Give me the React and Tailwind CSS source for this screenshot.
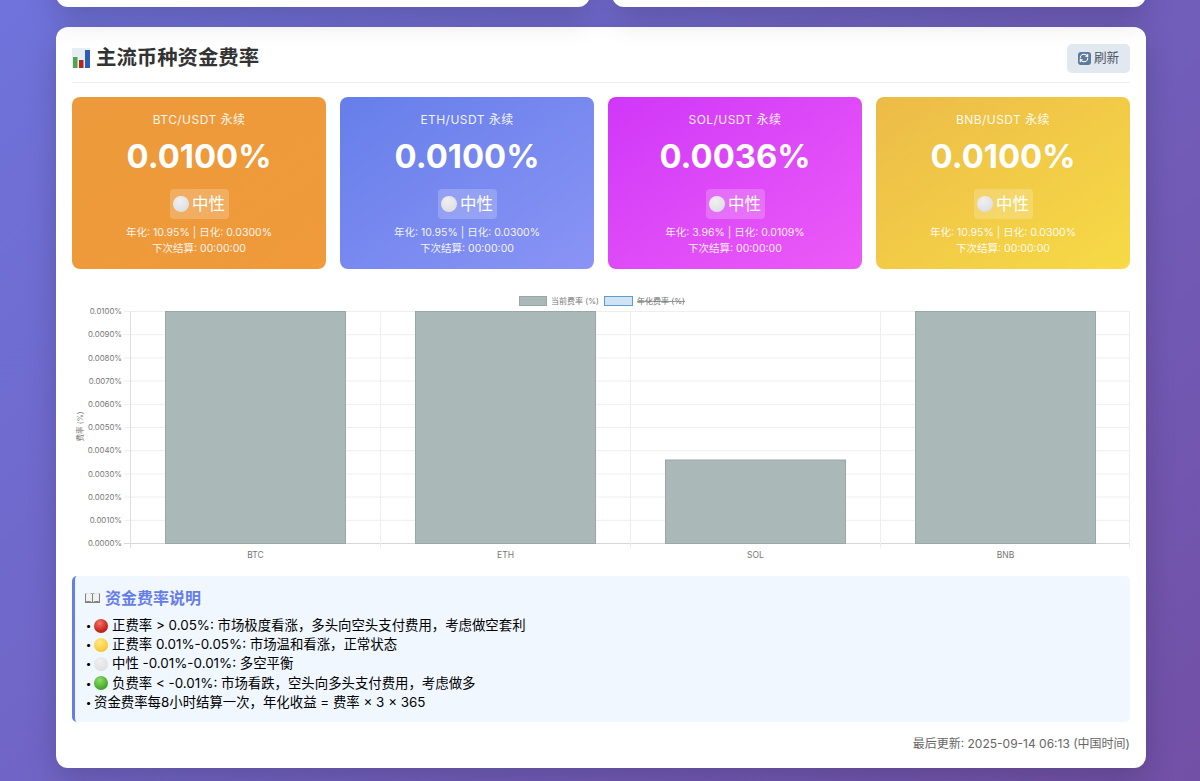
import { RefreshCw } from 'lucide-react';

const FONT = 'font-["Inter","Noto_Sans_CJK_SC",sans-serif]';

const coins = [
  { pair: 'BTC/USDT 永续', rate: '0.0100%', line: '年化: 10.95% | 日化: 0.0300%', bg: 'bg-gradient-to-br from-[#ec9a3b] to-[#f09a3a]' },
  { pair: 'ETH/USDT 永续', rate: '0.0100%', line: '年化: 10.95% | 日化: 0.0300%', bg: 'bg-gradient-to-br from-[#667eea] to-[#8a94f5]' },
  { pair: 'SOL/USDT 永续', rate: '0.0036%', line: '年化: 3.96% | 日化: 0.0109%', bg: 'bg-gradient-to-br from-[#d036f8] to-[#ec5af7]' },
  { pair: 'BNB/USDT 永续', rate: '0.0100%', line: '年化: 10.95% | 日化: 0.0300%', bg: 'bg-gradient-to-br from-[#ecbb48] to-[#f7da45]' },
];

const notes = [
  { dot: 'red', text: '正费率 > 0.05%: 市场极度看涨，多头向空头支付费用，考虑做空套利' },
  { dot: 'yellow', text: '正费率 0.01%-0.05%: 市场温和看涨，正常状态' },
  { dot: 'white', text: '中性 -0.01%-0.01%: 多空平衡' },
  { dot: 'green', text: '负费率 < -0.01%: 市场看跌，空头向多头支付费用，考虑做多' },
  { text: '资金费率每8小时结算一次，年化收益 = 费率 × 3 × 365' },
];

function Dot({ color, size = 'w-[14px] h-[14px]' }) {
  const fill = {
    red: 'bg-[radial-gradient(circle_at_40%_30%,#f0746a,#c8261c_60%,#8f1a14)]',
    yellow: 'bg-[radial-gradient(circle_at_40%_30%,#ffe88a,#fbcf3c_60%,#eaa820)]',
    white: 'bg-[radial-gradient(circle_at_40%_30%,#f0f0f2,#e2e2e4_65%,#d2d2d5)]',
    green: 'bg-[radial-gradient(circle_at_40%_30%,#8fdc6a,#4caf30_60%,#2d8a1e)]',
  }[color];
  return <span className={`inline-block rounded-full shrink-0 ${size} ${fill}`} />;
}

function ChartEmoji() {
  return (
    <svg width="18" height="20" viewBox="0 0 18 20" className="shrink-0">
      <rect width="18" height="20" fill="#e6edf3" />
      <rect x="1" y="9" width="4.5" height="11" fill="#4fa651" />
      <rect x="7" y="12" width="4.5" height="8" fill="#b3261e" />
      <rect x="13" y="2" width="5" height="18" fill="#2a5fb8" />
    </svg>
  );
}

function BookEmoji() {
  return (
    <svg width="15" height="12" viewBox="0 0 15 12" className="shrink-0">
      <path d="M0 1.5 L7 1 L7.5 2 L8 1 L15 1.5 V11 H0 Z" fill="#7d8288" />
      <path d="M1 1.5 C3 0.6 5.5 0.8 7 2 V10 C5.5 9 3 8.8 1 9.6 Z M14 1.5 C12 0.6 9.5 0.8 8 2 V10 C9.5 9 12 8.8 14 9.6 Z" fill="#f1f1ee" />
    </svg>
  );
}

function CoinCard({ coin }) {
  return (
    <div className={`h-[172px] rounded-[8px] pt-[14px] text-white text-center flex flex-col items-center ${coin.bg}`}>
      <div className="text-[12px] leading-[17px] opacity-90 tracking-[0.45px]">{coin.pair}</div>
      <div className="text-[32.8px] leading-[44px] font-bold mt-[6px]">{coin.rate}</div>
      <div className="mt-[11px] h-[30px] w-[59px] rounded-[4px] bg-white/20 flex items-center justify-center gap-[3px] text-[16.5px]">
        <Dot color="white" size="w-[16px] h-[16px]" />
        <span>中性</span>
      </div>
      <div className="mt-[6px] text-[10.5px] leading-[15.5px] opacity-90">
        <div>{coin.line}</div>
        <div>下次结算: 00:00:00</div>
      </div>
    </div>
  );
}

function RateChart() {
  const ticks = ['0.0100%', '0.0090%', '0.0080%', '0.0070%', '0.0060%', '0.0050%', '0.0040%', '0.0030%', '0.0020%', '0.0010%', '0.0000%'];
  const bars = [
    { label: 'BTC', x: 93.5, y: 21.5 },
    { label: 'ETH', x: 343.5, y: 21.5 },
    { label: 'SOL', x: 593.5, y: 170 },
    { label: 'BNB', x: 843.5, y: 21.5 },
  ];
  const top = 21.5;
  const step = 23.2;
  const bottom = top + step * 10;
  return (
    <svg width="1058" height="282" viewBox="0 0 1058 282" className="block" fontFamily="Inter, 'Noto Sans CJK SC', sans-serif">
      {/* legend */}
      <rect x="447.5" y="6.5" width="27" height="9" fill="#aab8b7" stroke="#98a8a8" />
      <text x="479" y="14" fontSize="8" fill="#777">当前费率 (%)</text>
      <rect x="532.5" y="6.5" width="28" height="9" fill="#cfe3f5" stroke="#5d9cd0" />
      <text x="565" y="14" fontSize="8" fill="#777" textDecoration="line-through">年化费率 (%)</text>

      {/* grid */}
      {ticks.map((t, i) => (
        <g key={t}>
          <line x1="52" x2="1058" y1={top + step * i} y2={top + step * i} stroke={i === 10 ? '#d8d8d8' : '#eeeeee'} />
          <text x="50" y={top + step * i + 2.7} fontSize="7.8" fill="#777" textAnchor="end">{t}</text>
        </g>
      ))}
      {[58.5, 308.5, 558.5, 808.5, 1058].map((x, i) => (
        <line key={x} x1={x - (i === 4 ? 0.5 : 0)} x2={x - (i === 4 ? 0.5 : 0)} y1={top} y2={bottom + 5} stroke={i === 0 ? '#dedede' : '#eeeeee'} />
      ))}
      <text transform={`translate(10.5 ${top + 115}) rotate(-90)`} fontSize="7.5" fill="#777" textAnchor="middle">费率 (%)</text>

      {/* bars */}
      {bars.map(b => (
        <g key={b.label}>
          <rect x={b.x} y={b.y} width="180" height={bottom - b.y} fill="#aab8b7" stroke="#98a8a8" />
          <text x={b.x + 90} y={bottom + 14.5} fontSize="8.5" fill="#777" textAnchor="middle">{b.label}</text>
        </g>
      ))}
    </svg>
  );
}

export default function App() {
  return (
    <div className={`h-[781px] overflow-hidden bg-[linear-gradient(135deg,#6f73db,#7250a6)] pl-[56px] pr-[54px] ${FONT}`}>
      <div className="grid grid-cols-2 gap-[22px] -mt-[34px]">
        <div className="h-[41px] bg-white rounded-[12px] shadow-[0_10px_30px_rgba(0,0,0,0.18)]" />
        <div className="h-[41px] bg-white rounded-[12px] shadow-[0_10px_30px_rgba(0,0,0,0.18)]" />
      </div>

      <div className="mt-[20px] h-[741px] bg-white rounded-[12px] shadow-[0_10px_30px_rgba(0,0,0,0.18)] px-[16px] pt-[11px]">
        <div className="h-[40px] flex items-center justify-between">
          <div className="flex items-center gap-[6px] text-[20.4px] font-semibold text-[#333]">
            <ChartEmoji />
            <span>主流币种资金费率</span>
          </div>
          <button className="h-[29px] w-[63px] rounded-[5px] bg-[#e2e8f0] text-[#4a5568] text-[12.6px] flex items-center justify-center gap-[3px]">
            <span className="w-[13px] h-[13px] rounded-[3px] bg-[#5c7a9c] flex items-center justify-center">
              <RefreshCw size={10} color="#fff" strokeWidth={2.5} />
            </span>
            <span>刷新</span>
          </button>
        </div>
        <div className="mt-[4px] border-b border-[#eeeeee]" />

        <div className="mt-[14px] grid grid-cols-4 gap-[14px]">
          {coins.map(c => <CoinCard key={c.pair} coin={c} />)}
        </div>

        <div className="mt-[21px]">
          <RateChart />
        </div>

        <div className="mt-[4px] h-[146px] rounded-[5px] bg-[#f0f7ff] border-l-[3px] border-[#667eea] pl-[10px] pt-[12px]">
          <div className="flex items-center gap-[5px] text-[16px] leading-[20px] font-semibold text-[#667eea]">
            <BookEmoji />
            <span>资金费率说明</span>
          </div>
          <div className="mt-[8px] text-[13.4px] leading-[19.2px] text-black">
            {notes.map(n => (
              <div key={n.text} className="flex items-center gap-[2px]">
                <span className="w-[7px] text-center text-[10px] shrink-0">•</span>
                {n.dot && <Dot color={n.dot} size="w-[14px] h-[14px] mr-[2px]" />}
                <span>{n.text}</span>
              </div>
            ))}
          </div>
        </div>

        <div className="mt-[14px] text-right text-[12px] leading-[16px] text-[#666]">最后更新: 2025-09-14 06:13 (中国时间)</div>
      </div>
    </div>
  );
}
